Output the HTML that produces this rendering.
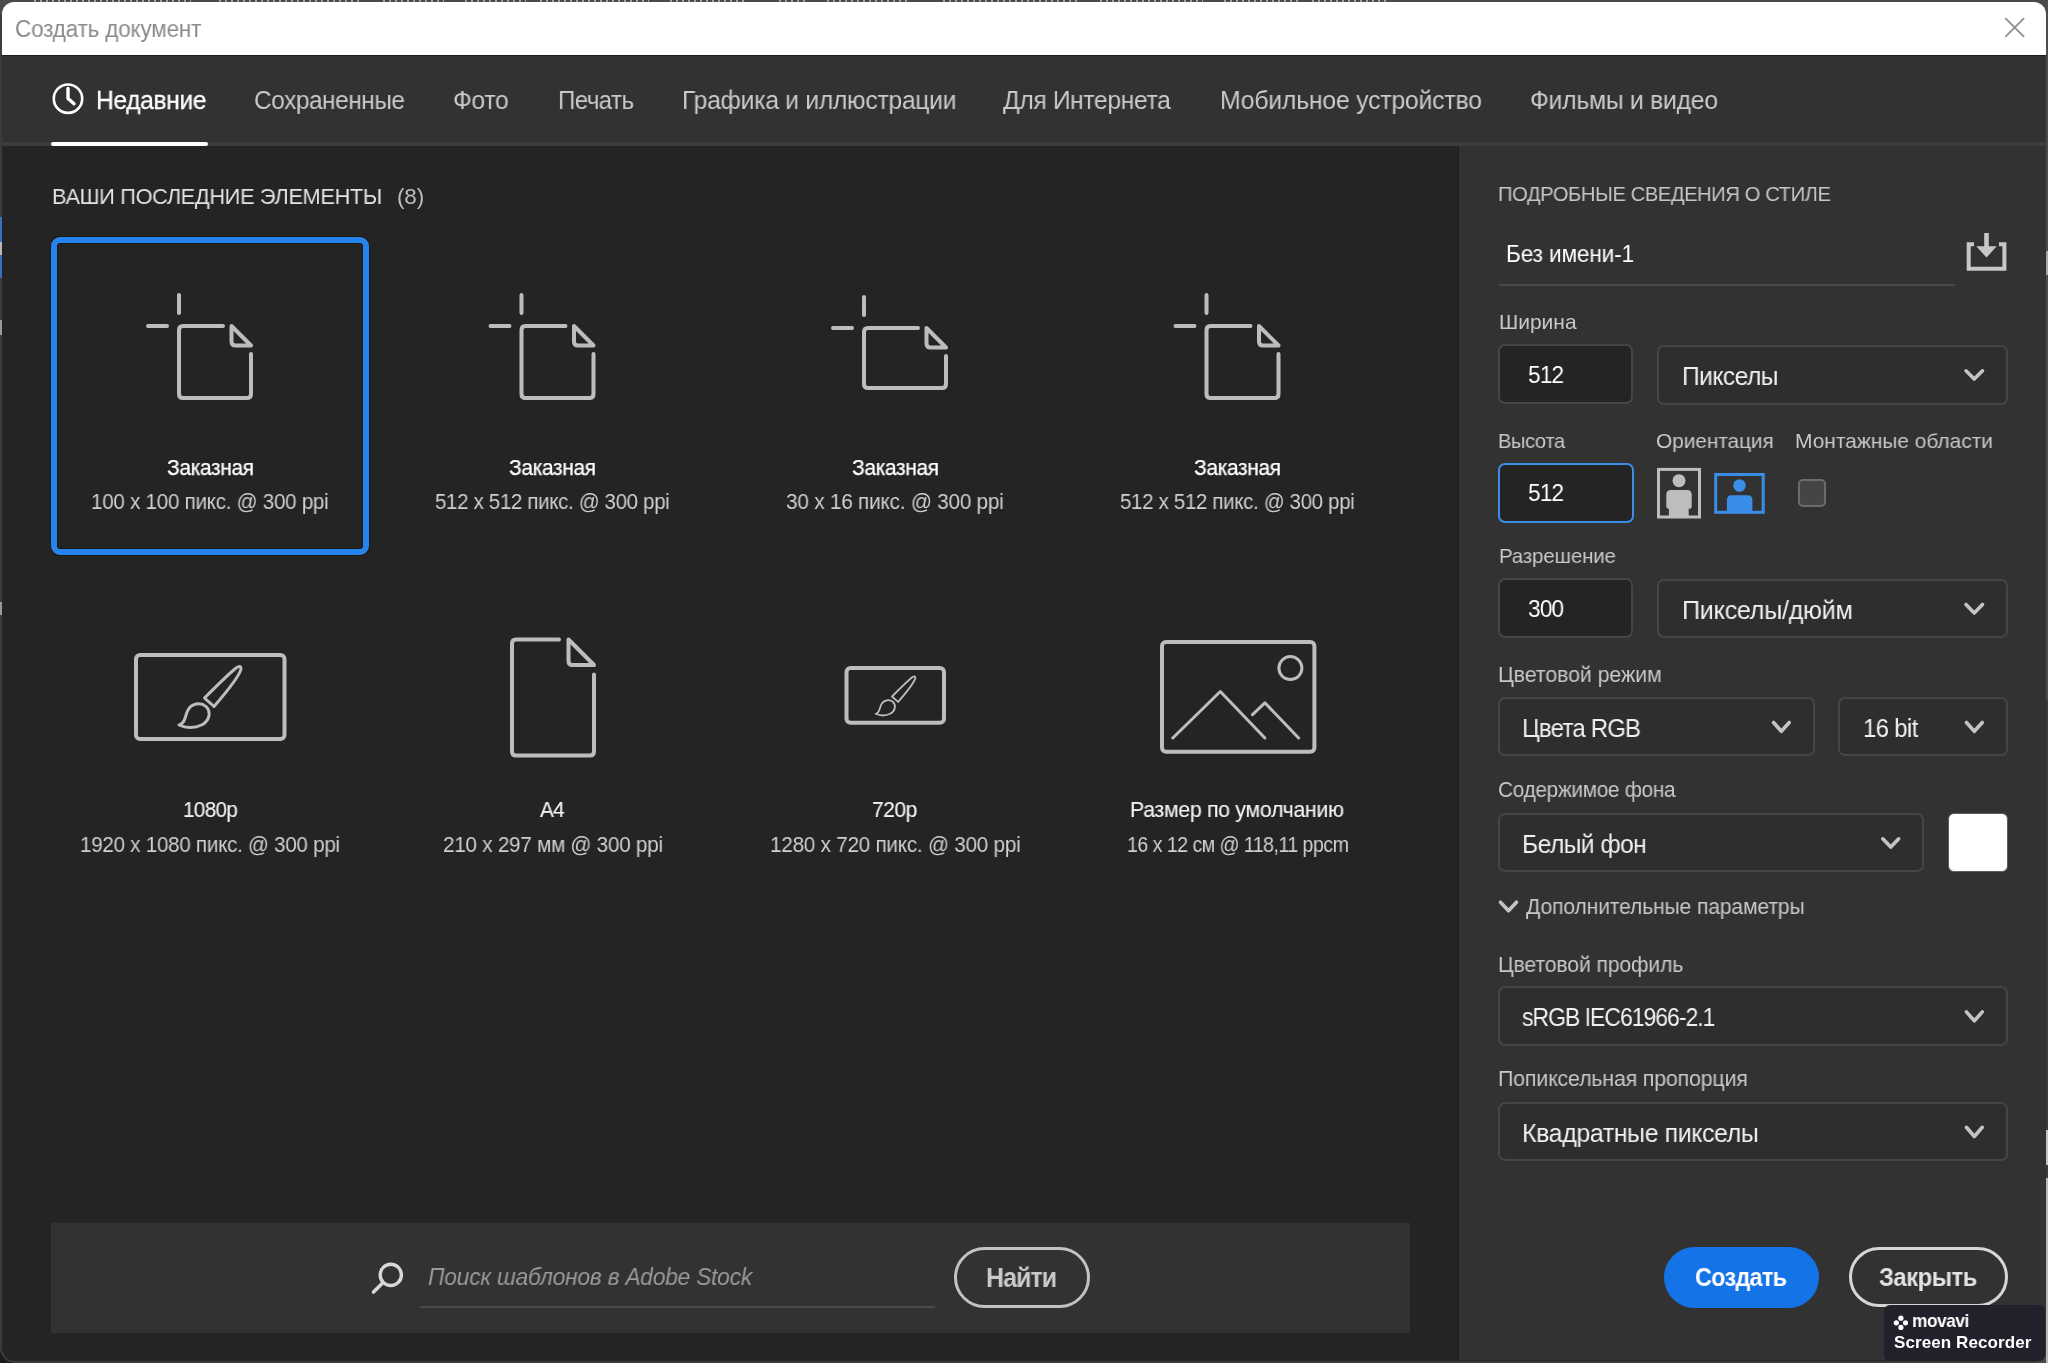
<!DOCTYPE html>
<html><head><meta charset="utf-8"><title>Создать документ</title><style>
html,body{margin:0;padding:0;}
body{width:2048px;height:1363px;overflow:hidden;position:relative;background:#4b4b4b;font-family:"Liberation Sans",sans-serif;}
.abs{position:absolute;left:0;top:0;}
.t{position:absolute;white-space:nowrap;will-change:transform;}
#dlg{position:absolute;left:2px;top:2px;width:2044px;height:1359px;border-radius:12px 12px 13px 13px;overflow:hidden;background:#242424;}
</style></head>
<body>

<div class="abs" style="left:0;top:0;width:2048px;height:1363px;background:#4a4a4a"></div>
<div class="abs" style="left:34px;top:0;width:157px;height:2px;background:repeating-linear-gradient(90deg,#a0a0a0 0 2px,#4a4a4a 2px 6px)"></div><div class="abs" style="left:219px;top:0;width:143px;height:2px;background:repeating-linear-gradient(90deg,#a0a0a0 0 2px,#4a4a4a 2px 6px)"></div><div class="abs" style="left:383px;top:0;width:61px;height:2px;background:repeating-linear-gradient(90deg,#a0a0a0 0 2px,#4a4a4a 2px 6px)"></div><div class="abs" style="left:465px;top:0;width:61px;height:2px;background:repeating-linear-gradient(90deg,#a0a0a0 0 2px,#4a4a4a 2px 6px)"></div><div class="abs" style="left:540px;top:0;width:109px;height:2px;background:repeating-linear-gradient(90deg,#a0a0a0 0 2px,#4a4a4a 2px 6px)"></div><div class="abs" style="left:670px;top:0;width:75px;height:2px;background:repeating-linear-gradient(90deg,#a0a0a0 0 2px,#4a4a4a 2px 6px)"></div><div class="abs" style="left:779px;top:0;width:28px;height:2px;background:repeating-linear-gradient(90deg,#a0a0a0 0 2px,#4a4a4a 2px 6px)"></div><div class="abs" style="left:827px;top:0;width:82px;height:2px;background:repeating-linear-gradient(90deg,#a0a0a0 0 2px,#4a4a4a 2px 6px)"></div><div class="abs" style="left:943px;top:0;width:137px;height:2px;background:repeating-linear-gradient(90deg,#a0a0a0 0 2px,#4a4a4a 2px 6px)"></div><div class="abs" style="left:1100px;top:0;width:103px;height:2px;background:repeating-linear-gradient(90deg,#a0a0a0 0 2px,#4a4a4a 2px 6px)"></div><div class="abs" style="left:1224px;top:0;width:75px;height:2px;background:repeating-linear-gradient(90deg,#a0a0a0 0 2px,#4a4a4a 2px 6px)"></div><div class="abs" style="left:1312px;top:0;width:76px;height:2px;background:repeating-linear-gradient(90deg,#a0a0a0 0 2px,#4a4a4a 2px 6px)"></div>
<div class="abs" style="left:0;top:1330px;width:30px;height:33px;background:#1c1c1c"></div>
<div class="abs" style="left:0;top:14px;width:2048px;height:1349px;background:#3c3c3c;border-radius:0 0 15px 15px"></div>
<div class="abs" style="left:2046px;top:0;width:2px;height:700px;background:#4c4c4c"></div>
<div class="abs" style="left:2046px;top:251px;width:2px;height:24px;background:#a8a8a8"></div>
<div class="abs" style="left:2046px;top:1130px;width:2px;height:35px;background:#c4c4c4"></div>
<div class="abs" style="left:2046px;top:1178px;width:2px;height:185px;background:#b8b8b8"></div>
<div class="abs" style="left:0;top:217px;width:2px;height:61px;background:#3a6fc0"></div>
<div class="abs" style="left:0;top:242px;width:2px;height:13px;background:#b8b8b8"></div>
<div class="abs" style="left:0;top:320px;width:2px;height:15px;background:#9a9a9a"></div>
<div class="abs" style="left:0;top:602px;width:2px;height:13px;background:#9a9a9a"></div>


<div id="dlg">
  <div class="abs" style="left:0;top:0;width:2044px;height:53px;background:#ffffff"></div>
  <div class="abs" style="left:0;top:53px;width:2044px;height:1px;background:#1e1e1e"></div>
  <div class="abs" style="left:0;top:54px;width:2044px;height:86px;background:#323232"></div>
  <div class="abs" style="left:0;top:140px;width:2044px;height:4px;background:#3d3d3d"></div>
  <div class="abs" style="left:1457px;top:144px;width:587px;height:1214px;background:#323232"></div>
  <div class="abs" style="left:1456px;top:144px;width:1px;height:1214px;background:#202020"></div>
  <div class="abs" style="left:49px;top:140px;width:157px;height:4px;background:#ffffff;border-radius:2px"></div>
</div>

<div class="abs" style="left:1497.5px;top:344px;width:135.5px;height:60px;box-sizing:border-box;background:#242424;border:2px solid #464646;border-radius:7px;"></div><div class="abs" style="left:1656.5px;top:345px;width:351.5px;height:59.5px;box-sizing:border-box;background:#2e2e2e;border:2px solid #464646;border-radius:7px;"></div><div class="abs" style="left:1497.5px;top:463px;width:136.0px;height:60px;box-sizing:border-box;background:#242424;border:2px solid #3a8ee8;border-radius:7px;"></div><div class="abs" style="left:1798px;top:479.3px;width:27.5px;height:27.5px;box-sizing:border-box;background:#454545;border:2px solid #6c6c6c;border-radius:5px;"></div><div class="abs" style="left:1497.5px;top:578px;width:135.5px;height:59.5px;box-sizing:border-box;background:#242424;border:2px solid #464646;border-radius:7px;"></div><div class="abs" style="left:1656.5px;top:578.5px;width:351.5px;height:59.0px;box-sizing:border-box;background:#2e2e2e;border:2px solid #464646;border-radius:7px;"></div><div class="abs" style="left:1497.8px;top:697.4px;width:317.0px;height:58.89999999999998px;box-sizing:border-box;background:#2e2e2e;border:2px solid #464646;border-radius:7px;"></div><div class="abs" style="left:1838px;top:697.4px;width:169.5999999999999px;height:58.89999999999998px;box-sizing:border-box;background:#2e2e2e;border:2px solid #464646;border-radius:7px;"></div><div class="abs" style="left:1497.8px;top:812.7px;width:426.5px;height:59.09999999999991px;box-sizing:border-box;background:#2e2e2e;border:2px solid #464646;border-radius:7px;"></div><div class="abs" style="left:1947.6px;top:812.7px;width:60.0px;height:59.5px;box-sizing:border-box;background:#ffffff;border:1.5px solid #5e5e5e;border-radius:6px;"></div><div class="abs" style="left:1497.8px;top:986px;width:509.79999999999995px;height:59.59999999999991px;box-sizing:border-box;background:#2e2e2e;border:2px solid #464646;border-radius:7px;"></div><div class="abs" style="left:1497.8px;top:1101.7px;width:509.79999999999995px;height:58.899999999999864px;box-sizing:border-box;background:#2e2e2e;border:2px solid #464646;border-radius:7px;"></div><div class="abs" style="left:1498.5px;top:284px;width:456.5px;height:2px;box-sizing:border-box;background:#4a4a4a;"></div><div class="abs" style="left:1663.5px;top:1247.3px;width:155.4000000000001px;height:60.90000000000009px;box-sizing:border-box;background:#1473e6;border-radius:31px;"></div><div class="abs" style="left:1849.3px;top:1247.3px;width:158.70000000000005px;height:60.200000000000045px;box-sizing:border-box;border:3.5px solid #d6d6d6;border-radius:31px;"></div><div class="abs" style="left:51px;top:1222.7px;width:1359px;height:110.09999999999991px;box-sizing:border-box;background:#323232;"></div><div class="abs" style="left:420px;top:1305.6px;width:515px;height:2.0px;box-sizing:border-box;background:#4a4a4a;"></div><div class="abs" style="left:953.9px;top:1247.4px;width:136.30000000000007px;height:60.19999999999982px;box-sizing:border-box;border:3.5px solid #c2c2c2;border-radius:31px;"></div><div class="abs" style="left:51px;top:236.6px;width:318px;height:318.4px;box-sizing:border-box;border:6px solid #2783ee;border-radius:9px;box-shadow:0 0 0 1px #1d1915, inset 0 0 0 1px #1d1915;"></div><div class="abs" style="left:1884px;top:1305px;width:161px;height:55.5px;box-sizing:border-box;background:#20212b;border-radius:6px;"></div>
<svg class="abs" width="2048" height="1363" viewBox="0 0 2048 1363" fill="none" stroke="#bdbdbd" stroke-width="4" stroke-linecap="round">
<path d="M179 295V313M148 326H167" />
<path d="M223 326H183Q179 326 179 330V394Q179 398 183 398H247Q251 398 251 394V354" />
<path d="M231.5 326L251 345.5H235.5Q231.5 345.5 231.5 341.5Z" stroke-linejoin="round"/>

<path d="M521.5 295V313M490.5 326H509.5" />
<path d="M565.5 326H525.5Q521.5 326 521.5 330V394Q521.5 398 525.5 398H589.5Q593.5 398 593.5 394V354" />
<path d="M574.0 326L593.5 345.5H578.0Q574.0 345.5 574.0 341.5Z" stroke-linejoin="round"/>

<path d="M1206.5 295V313M1175.5 326H1194.5" />
<path d="M1250.5 326H1210.5Q1206.5 326 1206.5 330V394Q1206.5 398 1210.5 398H1274.5Q1278.5 398 1278.5 394V354" />
<path d="M1259.0 326L1278.5 345.5H1263.0Q1259.0 345.5 1259.0 341.5Z" stroke-linejoin="round"/>

<path d="M864 297V315M833 328H852" />
<path d="M918 328H868Q864 328 864 332V384Q864 388 868 388H942Q946 388 946 384V356" />
<path d="M926.5 328L946 347.5H930.5Q926.5 347.5 926.5 343.5Z" stroke-linejoin="round"/>
<path d="M559 639.5H516Q512 639.5 512 643.5V751.5Q512 755.5 516 755.5H590Q594 755.5 594 751.5V674.5" />
<path d="M568.5 639.5L594 665.0H572.5Q568.5 665.0 568.5 661.0Z" stroke-linejoin="round"/><rect x="136" y="655" width="148.5" height="84" rx="4"/><path stroke-width="3" stroke-linejoin="round" d="M204.50 698.00C218.50 684.00 230.50 672.50 236.00 668.00Q241.00 664.50 241.00 669.00C239.50 676.00 226.50 692.00 214.00 706.50Z"/><path stroke-width="3" stroke-linejoin="round" d="M179.00 725.00C185.50 724.00 185.00 715.00 188.00 710.00C191.50 703.50 200.50 701.50 206.00 706.50C211.50 712.00 209.50 721.00 201.50 725.00C194.50 728.50 185.50 728.00 179.00 725.00Z"/><rect x="846.5" y="668" width="97.5" height="54.8" rx="4"/><path stroke-width="1.7919999999999998" stroke-linejoin="round" d="M892.00 696.50C900.96 687.54 908.64 680.18 912.16 677.30Q915.36 675.06 915.36 677.94C914.40 682.42 906.08 692.66 898.08 701.94Z"/><path stroke-width="1.7919999999999998" stroke-linejoin="round" d="M875.68 713.78C879.84 713.14 879.52 707.38 881.44 704.18C883.68 700.02 889.44 698.74 892.96 701.94C896.48 705.46 895.20 711.22 890.08 713.78C885.60 716.02 879.84 715.70 875.68 713.78Z"/><rect x="1162" y="642" width="152.4" height="109.8" rx="4"/><circle cx="1290.4" cy="668.1" r="11.5" stroke-width="3"/><path stroke-width="3" stroke-linejoin="round" d="M1172.8 738L1220.3 691.5L1264.9 738M1252.5 714.7L1264.9 702.8L1298.6 738"/></svg>
<svg class="abs" width="2048" height="1363" viewBox="0 0 2048 1363"><path d="M1966.0 370.8L1974.25 379.0L1982.5 370.8" stroke="#c4c4c4" stroke-width="3.6" fill="none" stroke-linecap="round" stroke-linejoin="round"/><path d="M1966.0 604.5L1974.25 613.0L1982.5 604.5" stroke="#c4c4c4" stroke-width="3.6" fill="none" stroke-linecap="round" stroke-linejoin="round"/><path d="M1773.5 722.5L1781.35 731.3L1789.2 722.5" stroke="#c4c4c4" stroke-width="3.6" fill="none" stroke-linecap="round" stroke-linejoin="round"/><path d="M1966.4 722.5L1974.35 731.3L1982.3 722.5" stroke="#c4c4c4" stroke-width="3.6" fill="none" stroke-linecap="round" stroke-linejoin="round"/><path d="M1882.8 838.8L1890.75 847.1L1898.7 838.8" stroke="#c4c4c4" stroke-width="3.6" fill="none" stroke-linecap="round" stroke-linejoin="round"/><path d="M1966.4 1011.9L1974.35 1020.8L1982.3 1011.9" stroke="#c4c4c4" stroke-width="3.6" fill="none" stroke-linecap="round" stroke-linejoin="round"/><path d="M1966.4 1127.3L1974.35 1136.5L1982.3 1127.3" stroke="#c4c4c4" stroke-width="3.6" fill="none" stroke-linecap="round" stroke-linejoin="round"/><path d="M1500.5 902.2L1508.5 910.8L1516.5 902.2" stroke="#c4c4c4" stroke-width="3.6" fill="none" stroke-linecap="round" stroke-linejoin="round"/><path d="M1974 244.3H1968.7V268.8H2004.4V244.3H1999" stroke="#c8c8c8" stroke-width="4" fill="none"/><path d="M1984.2 232.9H1988.8V246.2H1996.7L1986.5 257.6L1976.3 246.2H1984.2Z" fill="#c8c8c8"/><path d="M2005.8 18.6L2023.6 36.4M2023.6 18.6L2005.8 36.4" stroke="#8c9190" stroke-width="1.8" stroke-linecap="round"/><circle cx="68" cy="98.7" r="14.2" stroke="#ffffff" stroke-width="2.6" fill="none"/><path d="M68 88.5V98.5L74 103.8" stroke="#ffffff" stroke-width="3.4" fill="none" stroke-linecap="round" stroke-linejoin="round"/><circle cx="390.8" cy="1274.9" r="10.6" stroke="#d8d8d8" stroke-width="3.4" fill="none"/><path d="M382.6 1283L373.5 1292.1" stroke="#d8d8d8" stroke-width="3.6" stroke-linecap="round"/><rect x="1658.5" y="469.4" width="41" height="47.6" stroke="#bdbdbd" stroke-width="3" fill="none"/><circle cx="1679" cy="480.7" r="6.5" fill="#bdbdbd"/><path d="M1666.3 494.5Q1666.3 489.9 1671 489.9H1687Q1691.7 489.9 1691.7 494.5V506.5Q1691.7 508.8 1689 508.8H1688.7V516H1668.9V508.8H1668.6Q1666.3 508.8 1666.3 506.5Z" fill="#bdbdbd"/><rect x="1715.7" y="474.5" width="47.5" height="37.8" stroke="#3a8ee8" stroke-width="3" fill="none"/><circle cx="1739.5" cy="485.5" r="6.3" fill="#3a8ee8"/><path d="M1726.9 500Q1726.9 495.2 1731.7 495.2H1747.6Q1752.4 495.2 1752.4 500V511H1726.9Z" fill="#3a8ee8"/><circle cx="1900.9" cy="1318.2" r="2.6" fill="#ffffff"/><circle cx="1896.3" cy="1322.8" r="2.6" fill="#ffffff"/><circle cx="1905.5" cy="1322.8" r="2.6" fill="#ffffff"/><circle cx="1900.9" cy="1327.4" r="2.6" fill="#ffffff"/></svg>
<div class="t" style="left:14.90px;top:15.90px;font-size:23.0px;line-height:26px;letter-spacing:-0.189px;color:#8a8a8a;font-weight:normal;font-style:normal;transform:scaleX(0.9782);transform-origin:0 0;">Создать документ</div><div class="t" style="left:95.70px;top:85.60px;font-size:25.5px;line-height:28px;letter-spacing:-0.390px;color:#ffffff;font-weight:normal;font-style:normal;transform:scaleX(0.9652);transform-origin:0 0;-webkit-text-stroke:0.3px #ffffff">Недавние</div><div class="t" style="left:254.40px;top:85.60px;font-size:25.5px;line-height:28px;letter-spacing:-0.466px;color:#cacaca;font-weight:normal;font-style:normal;transform:scaleX(0.9572);transform-origin:0 0;">Сохраненные</div><div class="t" style="left:452.60px;top:85.60px;font-size:25.5px;line-height:28px;letter-spacing:-0.393px;color:#cacaca;font-weight:normal;font-style:normal;transform:scaleX(0.9702);transform-origin:0 0;">Фото</div><div class="t" style="left:557.60px;top:85.60px;font-size:25.5px;line-height:28px;letter-spacing:-0.617px;color:#cacaca;font-weight:normal;font-style:normal;transform:scaleX(0.9454);transform-origin:0 0;">Печать</div><div class="t" style="left:682.20px;top:85.60px;font-size:25.5px;line-height:28px;letter-spacing:-0.301px;color:#cacaca;font-weight:normal;font-style:normal;transform:scaleX(0.9690);transform-origin:0 0;">Графика и иллюстрации</div><div class="t" style="left:1002.90px;top:85.60px;font-size:25.5px;line-height:28px;letter-spacing:-0.353px;color:#cacaca;font-weight:normal;font-style:normal;transform:scaleX(0.9647);transform-origin:0 0;">Для Интернета</div><div class="t" style="left:1220.30px;top:85.60px;font-size:25.5px;line-height:28px;letter-spacing:-0.250px;color:#cacaca;font-weight:normal;font-style:normal;transform:scaleX(0.9742);transform-origin:0 0;">Мобильное устройство</div><div class="t" style="left:1529.90px;top:85.60px;font-size:25.5px;line-height:28px;letter-spacing:-0.281px;color:#cacaca;font-weight:normal;font-style:normal;transform:scaleX(0.9723);transform-origin:0 0;">Фильмы и видео</div><div class="t" style="left:52.40px;top:184.30px;font-size:22.5px;line-height:25px;letter-spacing:-0.349px;color:#e2e2e2;font-weight:normal;font-style:normal;transform:scaleX(0.9671);transform-origin:0 0;">ВАШИ ПОСЛЕДНИЕ ЭЛЕМЕНТЫ</div><div class="t" style="left:396.60px;top:184.30px;font-size:22.5px;line-height:25px;letter-spacing:-0.141px;color:#bdbdbd;font-weight:normal;font-style:normal;transform:scaleX(0.9849);transform-origin:0 0;">(8)</div><div class="t" style="left:166.50px;top:454.80px;font-size:22.0px;line-height:25px;letter-spacing:-0.409px;color:#ffffff;font-weight:normal;font-style:normal;transform:scaleX(0.9546);transform-origin:0 0;-webkit-text-stroke:0.25px #ffffff">Заказная</div><div class="t" style="left:91.00px;top:489.70px;font-size:21.5px;line-height:24px;letter-spacing:-0.289px;color:#d0d0d0;font-weight:normal;font-style:normal;transform:scaleX(0.9594);transform-origin:0 0;">100 x 100 пикс. @ 300 ppi</div><div class="t" style="left:509.00px;top:454.80px;font-size:22.0px;line-height:25px;letter-spacing:-0.409px;color:#ffffff;font-weight:normal;font-style:normal;transform:scaleX(0.9546);transform-origin:0 0;-webkit-text-stroke:0.25px #ffffff">Заказная</div><div class="t" style="left:435.00px;top:489.70px;font-size:21.5px;line-height:24px;letter-spacing:-0.342px;color:#d0d0d0;font-weight:normal;font-style:normal;transform:scaleX(0.9522);transform-origin:0 0;">512 x 512 пикс. @ 300 ppi</div><div class="t" style="left:851.50px;top:454.80px;font-size:22.0px;line-height:25px;letter-spacing:-0.409px;color:#ffffff;font-weight:normal;font-style:normal;transform:scaleX(0.9546);transform-origin:0 0;-webkit-text-stroke:0.25px #ffffff">Заказная</div><div class="t" style="left:786.00px;top:489.70px;font-size:21.5px;line-height:24px;letter-spacing:-0.240px;color:#d0d0d0;font-weight:normal;font-style:normal;transform:scaleX(0.9658);transform-origin:0 0;">30 x 16 пикс. @ 300 ppi</div><div class="t" style="left:1194.00px;top:454.80px;font-size:22.0px;line-height:25px;letter-spacing:-0.409px;color:#ffffff;font-weight:normal;font-style:normal;transform:scaleX(0.9546);transform-origin:0 0;-webkit-text-stroke:0.25px #ffffff">Заказная</div><div class="t" style="left:1120.00px;top:489.70px;font-size:21.5px;line-height:24px;letter-spacing:-0.342px;color:#d0d0d0;font-weight:normal;font-style:normal;transform:scaleX(0.9522);transform-origin:0 0;">512 x 512 пикс. @ 300 ppi</div><div class="t" style="left:182.65px;top:797.30px;font-size:22.0px;line-height:25px;letter-spacing:-0.651px;color:#f4f4f4;font-weight:normal;font-style:normal;transform:scaleX(0.9367);transform-origin:0 0;-webkit-text-stroke:0.12px #f4f4f4">1080p</div><div class="t" style="left:79.80px;top:832.50px;font-size:21.5px;line-height:24px;letter-spacing:-0.292px;color:#d0d0d0;font-weight:normal;font-style:normal;transform:scaleX(0.9594);transform-origin:0 0;">1920 x 1080 пикс. @ 300 ppi</div><div class="t" style="left:540.20px;top:797.30px;font-size:22.0px;line-height:25px;letter-spacing:-0.987px;color:#f4f4f4;font-weight:normal;font-style:normal;transform:scaleX(0.9457);transform-origin:0 0;-webkit-text-stroke:0.12px #f4f4f4">A4</div><div class="t" style="left:442.60px;top:832.50px;font-size:21.5px;line-height:24px;letter-spacing:-0.276px;color:#d0d0d0;font-weight:normal;font-style:normal;transform:scaleX(0.9631);transform-origin:0 0;">210 x 297 мм @ 300 ppi</div><div class="t" style="left:872.35px;top:797.30px;font-size:22.0px;line-height:25px;letter-spacing:-0.505px;color:#f4f4f4;font-weight:normal;font-style:normal;transform:scaleX(0.9540);transform-origin:0 0;-webkit-text-stroke:0.12px #f4f4f4">720p</div><div class="t" style="left:769.55px;top:832.50px;font-size:21.5px;line-height:24px;letter-spacing:-0.262px;color:#d0d0d0;font-weight:normal;font-style:normal;transform:scaleX(0.9634);transform-origin:0 0;">1280 x 720 пикс. @ 300 ppi</div><div class="t" style="left:1130.35px;top:797.30px;font-size:22.0px;line-height:25px;letter-spacing:-0.287px;color:#f4f4f4;font-weight:normal;font-style:normal;transform:scaleX(0.9660);transform-origin:0 0;-webkit-text-stroke:0.12px #f4f4f4">Размер по умолчанию</div><div class="t" style="left:1126.50px;top:832.50px;font-size:21.5px;line-height:24px;letter-spacing:-0.636px;color:#d0d0d0;font-weight:normal;font-style:normal;transform:scaleX(0.9159);transform-origin:0 0;">16 x 12 см @ 118,11 ppcm</div><div class="t" style="left:1498.20px;top:181.60px;font-size:21.0px;line-height:23px;letter-spacing:-0.400px;color:#c6c6c6;font-weight:normal;font-style:normal;transform:scaleX(0.9582);transform-origin:0 0;">ПОДРОБНЫЕ СВЕДЕНИЯ О СТИЛЕ</div><div class="t" style="left:1505.60px;top:240.90px;font-size:23.0px;line-height:26px;letter-spacing:-0.145px;color:#ffffff;font-weight:normal;font-style:normal;transform:scaleX(0.9835);transform-origin:0 0;">Без имени-1</div><div class="t" style="left:1498.60px;top:310.30px;font-size:21.0px;line-height:23px;letter-spacing:-0.016px;color:#c8c8c8;font-weight:normal;font-style:normal;transform:scaleX(0.9985);transform-origin:0 0;">Ширина</div><div class="t" style="left:1528.00px;top:360.50px;font-size:24.5px;line-height:27px;letter-spacing:-0.996px;color:#ffffff;font-weight:normal;font-style:normal;transform:scaleX(0.9280);transform-origin:0 0;">512</div><div class="t" style="left:1681.90px;top:361.10px;font-size:26.0px;line-height:30px;letter-spacing:-0.609px;color:#f0f0f0;font-weight:normal;font-style:normal;transform:scaleX(0.9482);transform-origin:0 0;">Пикселы</div><div class="t" style="left:1498.00px;top:428.50px;font-size:21.0px;line-height:23px;letter-spacing:-0.409px;color:#c8c8c8;font-weight:normal;font-style:normal;transform:scaleX(0.9577);transform-origin:0 0;">Высота</div><div class="t" style="left:1656.30px;top:428.50px;font-size:21.0px;line-height:23px;letter-spacing:-0.062px;color:#c8c8c8;font-weight:normal;font-style:normal;transform:scaleX(0.9929);transform-origin:0 0;">Ориентация</div><div class="t" style="left:1794.70px;top:428.50px;font-size:21.0px;line-height:23px;letter-spacing:-0.023px;color:#c8c8c8;font-weight:normal;font-style:normal;transform:scaleX(0.9973);transform-origin:0 0;">Монтажные области</div><div class="t" style="left:1528.00px;top:478.50px;font-size:24.5px;line-height:27px;letter-spacing:-0.996px;color:#ffffff;font-weight:normal;font-style:normal;transform:scaleX(0.9280);transform-origin:0 0;">512</div><div class="t" style="left:1498.70px;top:543.90px;font-size:21.0px;line-height:23px;letter-spacing:-0.193px;color:#c8c8c8;font-weight:normal;font-style:normal;transform:scaleX(0.9785);transform-origin:0 0;">Разрешение</div><div class="t" style="left:1528.00px;top:594.50px;font-size:24.5px;line-height:27px;letter-spacing:-0.996px;color:#ffffff;font-weight:normal;font-style:normal;transform:scaleX(0.9280);transform-origin:0 0;">300</div><div class="t" style="left:1681.90px;top:594.70px;font-size:26.0px;line-height:30px;letter-spacing:-0.329px;color:#f0f0f0;font-weight:normal;font-style:normal;transform:scaleX(0.9700);transform-origin:0 0;">Пикселы/дюйм</div><div class="t" style="left:1498.30px;top:662.80px;font-size:21.5px;line-height:24px;letter-spacing:-0.068px;color:#c8c8c8;font-weight:normal;font-style:normal;transform:scaleX(0.9920);transform-origin:0 0;">Цветовой режим</div><div class="t" style="left:1522.30px;top:712.70px;font-size:26.0px;line-height:30px;letter-spacing:-0.879px;color:#f0f0f0;font-weight:normal;font-style:normal;transform:scaleX(0.9235);transform-origin:0 0;">Цвета RGB</div><div class="t" style="left:1862.70px;top:712.70px;font-size:26.0px;line-height:30px;letter-spacing:-0.700px;color:#f0f0f0;font-weight:normal;font-style:normal;transform:scaleX(0.9190);transform-origin:0 0;">16 bit</div><div class="t" style="left:1497.80px;top:777.70px;font-size:21.5px;line-height:24px;letter-spacing:-0.305px;color:#c8c8c8;font-weight:normal;font-style:normal;transform:scaleX(0.9663);transform-origin:0 0;">Содержимое фона</div><div class="t" style="left:1522.30px;top:828.80px;font-size:26.0px;line-height:30px;letter-spacing:-0.601px;color:#f0f0f0;font-weight:normal;font-style:normal;transform:scaleX(0.9475);transform-origin:0 0;">Белый фон</div><div class="t" style="left:1525.70px;top:894.60px;font-size:21.5px;line-height:24px;letter-spacing:-0.146px;color:#c8c8c8;font-weight:normal;font-style:normal;transform:scaleX(0.9825);transform-origin:0 0;">Дополнительные параметры</div><div class="t" style="left:1498.30px;top:952.80px;font-size:21.5px;line-height:24px;letter-spacing:-0.126px;color:#c8c8c8;font-weight:normal;font-style:normal;transform:scaleX(0.9851);transform-origin:0 0;">Цветовой профиль</div><div class="t" style="left:1522.30px;top:1001.90px;font-size:26.0px;line-height:30px;letter-spacing:-1.157px;color:#f0f0f0;font-weight:normal;font-style:normal;transform:scaleX(0.8852);transform-origin:0 0;">sRGB IEC61966-2.1</div><div class="t" style="left:1498.30px;top:1066.20px;font-size:22.0px;line-height:25px;letter-spacing:-0.212px;color:#c8c8c8;font-weight:normal;font-style:normal;transform:scaleX(0.9745);transform-origin:0 0;">Попиксельная пропорция</div><div class="t" style="left:1522.30px;top:1117.90px;font-size:26.0px;line-height:30px;letter-spacing:-0.413px;color:#f0f0f0;font-weight:normal;font-style:normal;transform:scaleX(0.9588);transform-origin:0 0;">Квадратные пикселы</div><div class="t" style="left:1694.80px;top:1263.00px;font-size:25.0px;line-height:28px;letter-spacing:-0.744px;color:#ffffff;font-weight:bold;font-style:normal;transform:scaleX(0.9357);transform-origin:0 0;">Создать</div><div class="t" style="left:1879.40px;top:1263.00px;font-size:25.0px;line-height:28px;letter-spacing:-0.546px;color:#e2e2e2;font-weight:bold;font-style:normal;transform:scaleX(0.9540);transform-origin:0 0;">Закрыть</div><div class="t" style="left:427.70px;top:1263.70px;font-size:23.5px;line-height:26px;letter-spacing:-0.254px;color:#9a9a9a;font-weight:normal;font-style:italic;transform:scaleX(0.9701);transform-origin:0 0;">Поиск шаблонов в Adobe Stock</div><div class="t" style="left:985.50px;top:1262.60px;font-size:27.0px;line-height:30px;letter-spacing:-1.018px;color:#cacaca;font-weight:bold;font-style:normal;transform:scaleX(0.9255);transform-origin:0 0;">Найти</div>
<div class="t" style="left:1911.90px;top:1310.20px;font-size:18.5px;line-height:21px;letter-spacing:-0.545px;color:#ffffff;font-weight:bold;font-style:normal;transform:scaleX(0.9368);transform-origin:0 0;">movavi</div><div class="t" style="left:1894.00px;top:1333.00px;font-size:17.0px;line-height:19px;letter-spacing:0.093px;color:#ffffff;font-weight:bold;font-style:normal;">Screen Recorder</div>
</body></html>
